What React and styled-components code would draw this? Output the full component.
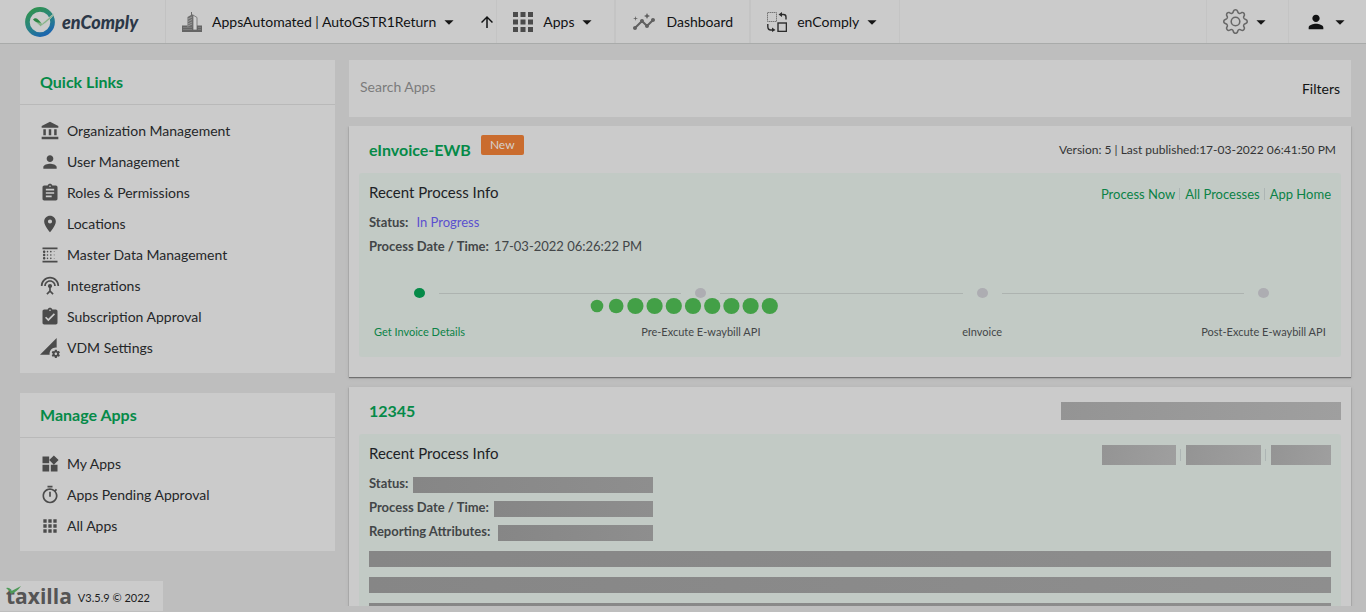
import React from "react";
import styled, { createGlobalStyle } from "styled-components";
import {
  MdAccountBalance,
  MdPerson,
  MdAssignment,
  MdLocationOn,
  MdBlurLinear,
  MdSettingsInputAntenna,
  MdAssignmentTurnedIn,
  MdPermDataSetting,
  MdWidgets,
  MdOutlineTimer,
  MdApps,
  MdInsights,
  MdArrowUpward,
  MdArrowDropDown,
} from "react-icons/md";
import { BsGear } from "react-icons/bs";

const Global = createGlobalStyle`
  * { box-sizing: border-box; }
  body {
    margin: 0;
    background: #bebebe;
    color: #1c1d1e;
    font-family: Lato, "Liberation Sans", sans-serif;
    font-size: 14px;
    line-height: 20px;
  }
  button { border: 0; background: none; font: inherit; color: inherit; cursor: pointer; padding: 0; }
  a { color: inherit; text-decoration: none; }
  h2, h3, p, ul, ol, dl, dd { margin: 0; padding: 0; list-style: none; }
`;

const Shell = styled.div`
  height: 100vh;
  display: flex;
  flex-direction: column;
`;

const TopBar = styled.header`
  display: flex;
  flex: none;
  height: 44px;
  background: #cbcbcb;
  border-bottom: 1px solid #a9abaa;
`;

const Brand = styled.a`
  display: flex;
  align-items: center;
  gap: 6px;
  width: 166px;
  padding-left: 25px;
  border-right: 1px solid #c2c2c2;
`;

const BrandName = styled.span`
  font-size: 18px;
  font-style: italic;
  font-weight: 900;
  color: #2b3848;
`;

const NavGroup = styled.nav`
  display: flex;
`;

const NavCell = styled.div`
  display: flex;
  align-items: center;
  gap: 24px;
  padding: 0 ${(p) => p.$right ?? 16}px 0 16px;
  border-right: ${(p) => p.$line || 1}px solid #c4c4c4;
`;

const NavButton = styled.button`
  display: flex;
  align-items: center;
  gap: 10px;
  white-space: nowrap;
  color: #111213;
`;

const Caret = styled(MdArrowDropDown)`
  flex: none;
  width: 22px;
  height: 22px;
  margin: 0 -6px 0 -8px;
  color: #161616;
`;

const GridIcon = styled(MdApps)`
  width: 30px;
  height: 30px;
  margin: 0 -5px;
  color: #4b4b4b;
`;

const Spacer = styled.div`
  flex: 1;
`;

const UserCell = styled.div`
  display: flex;
  align-items: center;
  width: ${(p) => p.$width}px;
  padding-left: 16px;
  border-left: 1px solid #c4c4c4;
`;

const Body = styled.div`
  flex: 1;
  min-height: 0;
  display: flex;
  gap: 14px;
  padding: 16px 15px 6px 20px;
`;

const Side = styled.aside`
  flex: none;
  width: 315px;
  display: flex;
  flex-direction: column;
  gap: 20px;
`;

const Panel = styled.section`
  background: #cbcbcb;
`;

const PanelTitle = styled.h2`
  padding: 12px 20px;
  border-bottom: 1px solid #b9b9b9;
  font-size: 16px;
  line-height: 20px;
  font-weight: 700;
  color: #058a48;
`;

const LinkList = styled.ul`
  padding: 10px 20px;
`;

const SideLink = styled.a`
  display: flex;
  align-items: center;
  gap: 7px;
  height: 31px;
  color: #252729;
  svg { width: 20px; height: 20px; color: #4b4b4b; }
`;

const Main = styled.main`
  flex: 1;
  min-width: 0;
  display: flex;
  flex-direction: column;
  gap: 9px;
`;

const SearchBar = styled.div`
  flex: none;
  display: flex;
  align-items: center;
  height: 57px;
  padding: 0 11px;
  background: #cbcbcb;
`;

const SearchInput = styled.input`
  flex: 1;
  height: 32px;
  margin-bottom: 4px;
  padding: 0;
  border: 0;
  outline: 0;
  background: none;
  font: inherit;
  color: #1c1d1e;
  &::placeholder { color: #7b7b7b; opacity: 1; }
`;

const Cards = styled.div`
  flex: 1;
  min-height: 0;
  display: flex;
  flex-direction: column;
  gap: 10px;
  margin: 0 -15px 0 -5px;
  padding: 0 15px 0 5px;
  overflow: hidden;
`;

const Card = styled.article`
  flex: none;
  padding: 0 10px 20px;
  background: #cbcbcb;
  box-shadow: 0 1px 1px #707070, 0 1px 3px #a4a4a4;
`;

const CardHead = styled.div`
  display: flex;
  align-items: center;
  height: 47px;
  padding: 0 ${(p) => p.$right || 0}px 0 10px;
`;

const CardTitle = styled.h2`
  font-size: 16px;
  font-weight: 700;
  color: #058a48;
`;

const Badge = styled.span`
  align-self: flex-start;
  margin: 9px 0 0 10px;
  padding: 0 9px;
  border-radius: 2px;
  background: #ca6c2e;
  color: #d6d0cc;
  font-size: 12px;
`;

const Version = styled.p`
  margin-left: auto;
  font-size: 12px;
  color: #333435;
`;

const Info = styled.section`
  min-height: 184px;
  padding: 9px 10px 10px;
  border-radius: 3px;
  background: #c2cac5;
`;

const InfoHead = styled.div`
  display: flex;
  justify-content: space-between;
  align-items: flex-start;
  margin-bottom: 6px;
`;

const InfoTitle = styled.h3`
  font-size: 15px;
  font-weight: 400;
  color: #1d2226;
`;

const Actions = styled.div`
  display: flex;
  align-items: center;
  padding-top: 2px;
  font-size: 13px;
  color: #0b8247;
`;

const Divider = styled.span`
  width: 1px;
  height: 12px;
  margin: 0 5px 0 4px;
  background: #adb5b4;
`;

const Facts = styled.dl`
  font-size: 13px;
  line-height: 24px;
  color: #434648;
`;

const Fact = styled.div`
  display: flex;
  align-items: center;
  gap: ${(p) => p.$gap || 5}px;
  height: 24px;
`;

const Term = styled.dt`
  font-weight: 700;
`;

const StatusValue = styled.dd`
  color: #5b50cf;
`;

const MaskedValue = styled.dd`
  padding-top: 3px;
`;

const Steps = styled.ol`
  display: flex;
  align-items: flex-start;
  gap: 14px;
  padding: 30px 62px 0 45px;
`;

const Step = styled.li`
  display: flex;
  flex-direction: column;
  align-items: center;
  gap: 24px;
  width: 11px;
  font-size: 11px;
  white-space: nowrap;
  color: ${(p) => (p.$active ? "#0b8247" : "#434648")};
  &::before {
    content: "";
    flex: none;
    width: 11px;
    height: 10px;
    border-radius: 50%;
    background: ${(p) => (p.$active ? "#058a48" : "#adadb2")};
  }
`;

const StepLine = styled.li`
  flex: 1;
  height: 1px;
  margin-top: 5px;
  background: #adb3b0;
`;

const Mask = styled.span`
  display: block;
  flex: none;
  width: ${(p) => (p.$width ? p.$width + "px" : "100%")};
  height: ${(p) => p.$height || 16}px;
  background: ${(p) =>
    p.$light
      ? "linear-gradient(100deg, #949494, #9f9f9f)"
      : "linear-gradient(90deg, #868686, #8e8e8e)"};
`;

const MaskRows = styled.div`
  display: flex;
  flex-direction: column;
  gap: 10px;
  padding-top: 8px;
`;

const Loader = styled.svg`
  position: fixed;
  top: 50%;
  left: 50%;
  transform: translate(-50%, -50%);
`;

const Footer = styled.footer`
  position: fixed;
  left: 0;
  bottom: 1px;
  display: flex;
  align-items: center;
  gap: 6px;
  width: 163px;
  height: 30px;
  padding-left: 6px;
  background: #cbcbcb;
`;

const FooterLogo = styled.span`
  position: relative;
  font-family: "Open Sans", "Noto Sans", sans-serif;
  font-size: 21px;
  font-weight: 700;
  color: #555;
  svg { position: absolute; left: 0; top: 0; }
`;

const FooterText = styled.small`
  padding-top: 4px;
  font-size: 11px;
`;

const BrandMark = () => (
  <svg width="31" height="30" viewBox="0 0 31 30">
    <defs>
      <linearGradient id="ring" x1="0.2" y1="0" x2="0.7" y2="1">
        <stop offset="0" stopColor="#2f9150" />
        <stop offset="0.5" stopColor="#2a8580" />
        <stop offset="1" stopColor="#1c66ae" />
      </linearGradient>
    </defs>
    <circle cx="15" cy="15" r="12.6" fill="none" stroke="url(#ring)" strokeWidth="4.6" />
    <path d="M8 12.5Q11 10 13.500 13L17 16.500 29.500 6Q27 12 15.500 19.500Z" fill="#86b387" stroke="#cbcbcb" strokeWidth=".6" />
    <path d="M8 12.500Q11 10 13.500 13L16 15.800Q11 16 8 12.500Z" fill="#2e8546" />
  </svg>
);

const BuildingIcon = () => (
  <svg width="20" height="20" viewBox="0 0 20 20">
    <path d="M5.500 5L9 3V0h1v2l1 1v12H5.500Z" fill="#6c6c6c" />
    <path d="M6 7l4-2M6 9.500l4-2M6 12l4-2M6 14l4-2" stroke="#a5a5a5" strokeWidth=".8" />
    <path d="M11 3l4 2.500V18h-4Z" fill="#d0d0d0" stroke="#6c6c6c" strokeWidth=".8" />
    <path d="M0 13.500h5.500V15H11v5H0ZM15 13.500h5V20h-9v-2h4Z" fill="#656565" />
    <path d="M1 15.500h9M1 17.500h9M16 15.500h3M16 17.500h3" stroke="#8a8a8a" strokeWidth=".6" />
  </svg>
);

const SwitchIcon = () => (
  <svg width="20" height="20" viewBox="0 0 20 20" fill="none" stroke="#2c2c2c">
    <rect x=".5" y=".5" width="9" height="9" stroke="#777" strokeDasharray="1.500 .5" />
    <rect x="11" y="11" width="8.400" height="8.400" strokeWidth="1.400" />
    <path d="M14 2.500h2.500q2.500 0 2.500 2.500v2.500M.8 12v2.500q0 3.500 3 3.500h2.500" strokeWidth="1.400" />
    <path d="M11.500 2.500l3.500-2.500v5ZM8.500 18l-3.500-2.500v4.500Z" fill="#2c2c2c" stroke="none" />
  </svg>
);

const quickLinks = [
  [MdAccountBalance, "Organization Management"],
  [MdPerson, "User Management"],
  [MdAssignment, "Roles & Permissions"],
  [MdLocationOn, "Locations"],
  [MdBlurLinear, "Master Data Management"],
  [MdSettingsInputAntenna, "Integrations"],
  [MdAssignmentTurnedIn, "Subscription Approval"],
  [MdPermDataSetting, "VDM Settings"],
];

const appLinks = [
  [MdWidgets, "My Apps"],
  [MdOutlineTimer, "Apps Pending Approval"],
  [MdApps, "All Apps"],
];

const steps = ["Get Invoice Details", "Pre-Excute E-waybill API", "eInvoice", "Post-Excute E-waybill API"];

const loaderRadii = [6.3, 7.3, 8.1, 8.1, 8.1, 8.1, 8.1, 8.1, 8.1, 8.1];

const LinkPanel = ({ title, links }) => (
  <Panel>
    <PanelTitle>{title}</PanelTitle>
    <LinkList>
      {links.map(([Icon, label]) => (
        <li key={label}>
          <SideLink href="#"><Icon />{label}</SideLink>
        </li>
      ))}
    </LinkList>
  </Panel>
);

export default function App() {
  return (
    <Shell>
      <Global />
      <TopBar>
        <Brand href="#"><BrandMark /><BrandName>enComply</BrandName></Brand>
        <NavGroup>
          <NavCell $right={0}>
            <NavButton><BuildingIcon />AppsAutomated | AutoGSTR1Return<Caret /></NavButton>
            <NavButton aria-label="Go up"><MdArrowUpward size={18} /></NavButton>
          </NavCell>
          <NavCell $right={22} $line={2}>
            <NavButton><GridIcon />Apps<Caret /></NavButton>
          </NavCell>
          <NavCell $line={2}>
            <NavButton><MdInsights size={24} color="#606060" />Dashboard</NavButton>
          </NavCell>
          <NavCell $right={22}>
            <NavButton><SwitchIcon />enComply<Caret /></NavButton>
          </NavCell>
        </NavGroup>
        <Spacer />
        <UserCell $width={82}>
          <NavButton aria-label="Settings"><BsGear size={25} color="#686868" /><Caret /></NavButton>
        </UserCell>
        <UserCell $width={78}>
          <NavButton aria-label="Account"><MdPerson size={22} /><Caret /></NavButton>
        </UserCell>
      </TopBar>
      <Body>
        <Side>
          <LinkPanel title="Quick Links" links={quickLinks} />
          <LinkPanel title="Manage Apps" links={appLinks} />
        </Side>
        <Main>
          <SearchBar>
            <SearchInput aria-label="Search Apps" placeholder="Search Apps" />
            <NavButton>Filters</NavButton>
          </SearchBar>
          <Cards>
            <Card>
              <CardHead $right={5}>
                <CardTitle>eInvoice-EWB</CardTitle>
                <Badge>New</Badge>
                <Version>Version: 5 | Last published:17-03-2022 06:41:50 PM</Version>
              </CardHead>
              <Info>
                <InfoHead>
                  <InfoTitle>Recent Process Info</InfoTitle>
                  <Actions>
                    <a href="#">Process Now</a><Divider />
                    <a href="#">All Processes</a><Divider />
                    <a href="#">App Home</a>
                  </Actions>
                </InfoHead>
                <Facts>
                  <Fact $gap={8}><Term>Status:</Term><StatusValue>In Progress</StatusValue></Fact>
                  <Fact><Term>Process Date / Time:</Term><dd>17-03-2022 06:26:22 PM</dd></Fact>
                </Facts>
                <Steps>
                  {steps.map((label, i) => (
                    <React.Fragment key={label}>
                      {i > 0 && <StepLine aria-hidden="true" />}
                      <Step $active={i === 0}>{label}</Step>
                    </React.Fragment>
                  ))}
                </Steps>
              </Info>
            </Card>
            <Card>
              <CardHead>
                <CardTitle>12345</CardTitle>
                <Version><Mask $light $width={280} $height={18} /></Version>
              </CardHead>
              <Info>
                <InfoHead>
                  <InfoTitle>Recent Process Info</InfoTitle>
                  <Actions>
                    <Mask $light $width={74} $height={20} /><Divider />
                    <Mask $light $width={75} $height={20} /><Divider />
                    <Mask $light $width={60} $height={20} />
                  </Actions>
                </InfoHead>
                <Facts>
                  <Fact><Term>Status:</Term><MaskedValue><Mask $width={240} /></MaskedValue></Fact>
                  <Fact><Term>Process Date / Time:</Term><MaskedValue><Mask $width={159} /></MaskedValue></Fact>
                  <Fact $gap={8}><Term>Reporting Attributes:</Term><MaskedValue><Mask $width={155} /></MaskedValue></Fact>
                </Facts>
                <MaskRows><Mask /><Mask /><Mask /></MaskRows>
              </Info>
            </Card>
          </Cards>
        </Main>
      </Body>
      <Loader width="190" height="18" viewBox="0 0 190 18" role="img" aria-label="Loading">
        {loaderRadii.map((r, i) => (
          <circle key={i} cx={9 + i * 19.2} cy="9" r={r} fill="#43a047" />
        ))}
      </Loader>
      <Footer>
        <FooterLogo>
          taxilla
          <svg width="16" height="10" viewBox="0 0 16 10">
            <path d="M0 2Q4 1 5.500 5L15 0Q11 6 5 8Q3 4 0 2Z" fill="#4f9a58" />
          </svg>
        </FooterLogo>
        <FooterText>V3.5.9 © 2022</FooterText>
      </Footer>
    </Shell>
  );
}
